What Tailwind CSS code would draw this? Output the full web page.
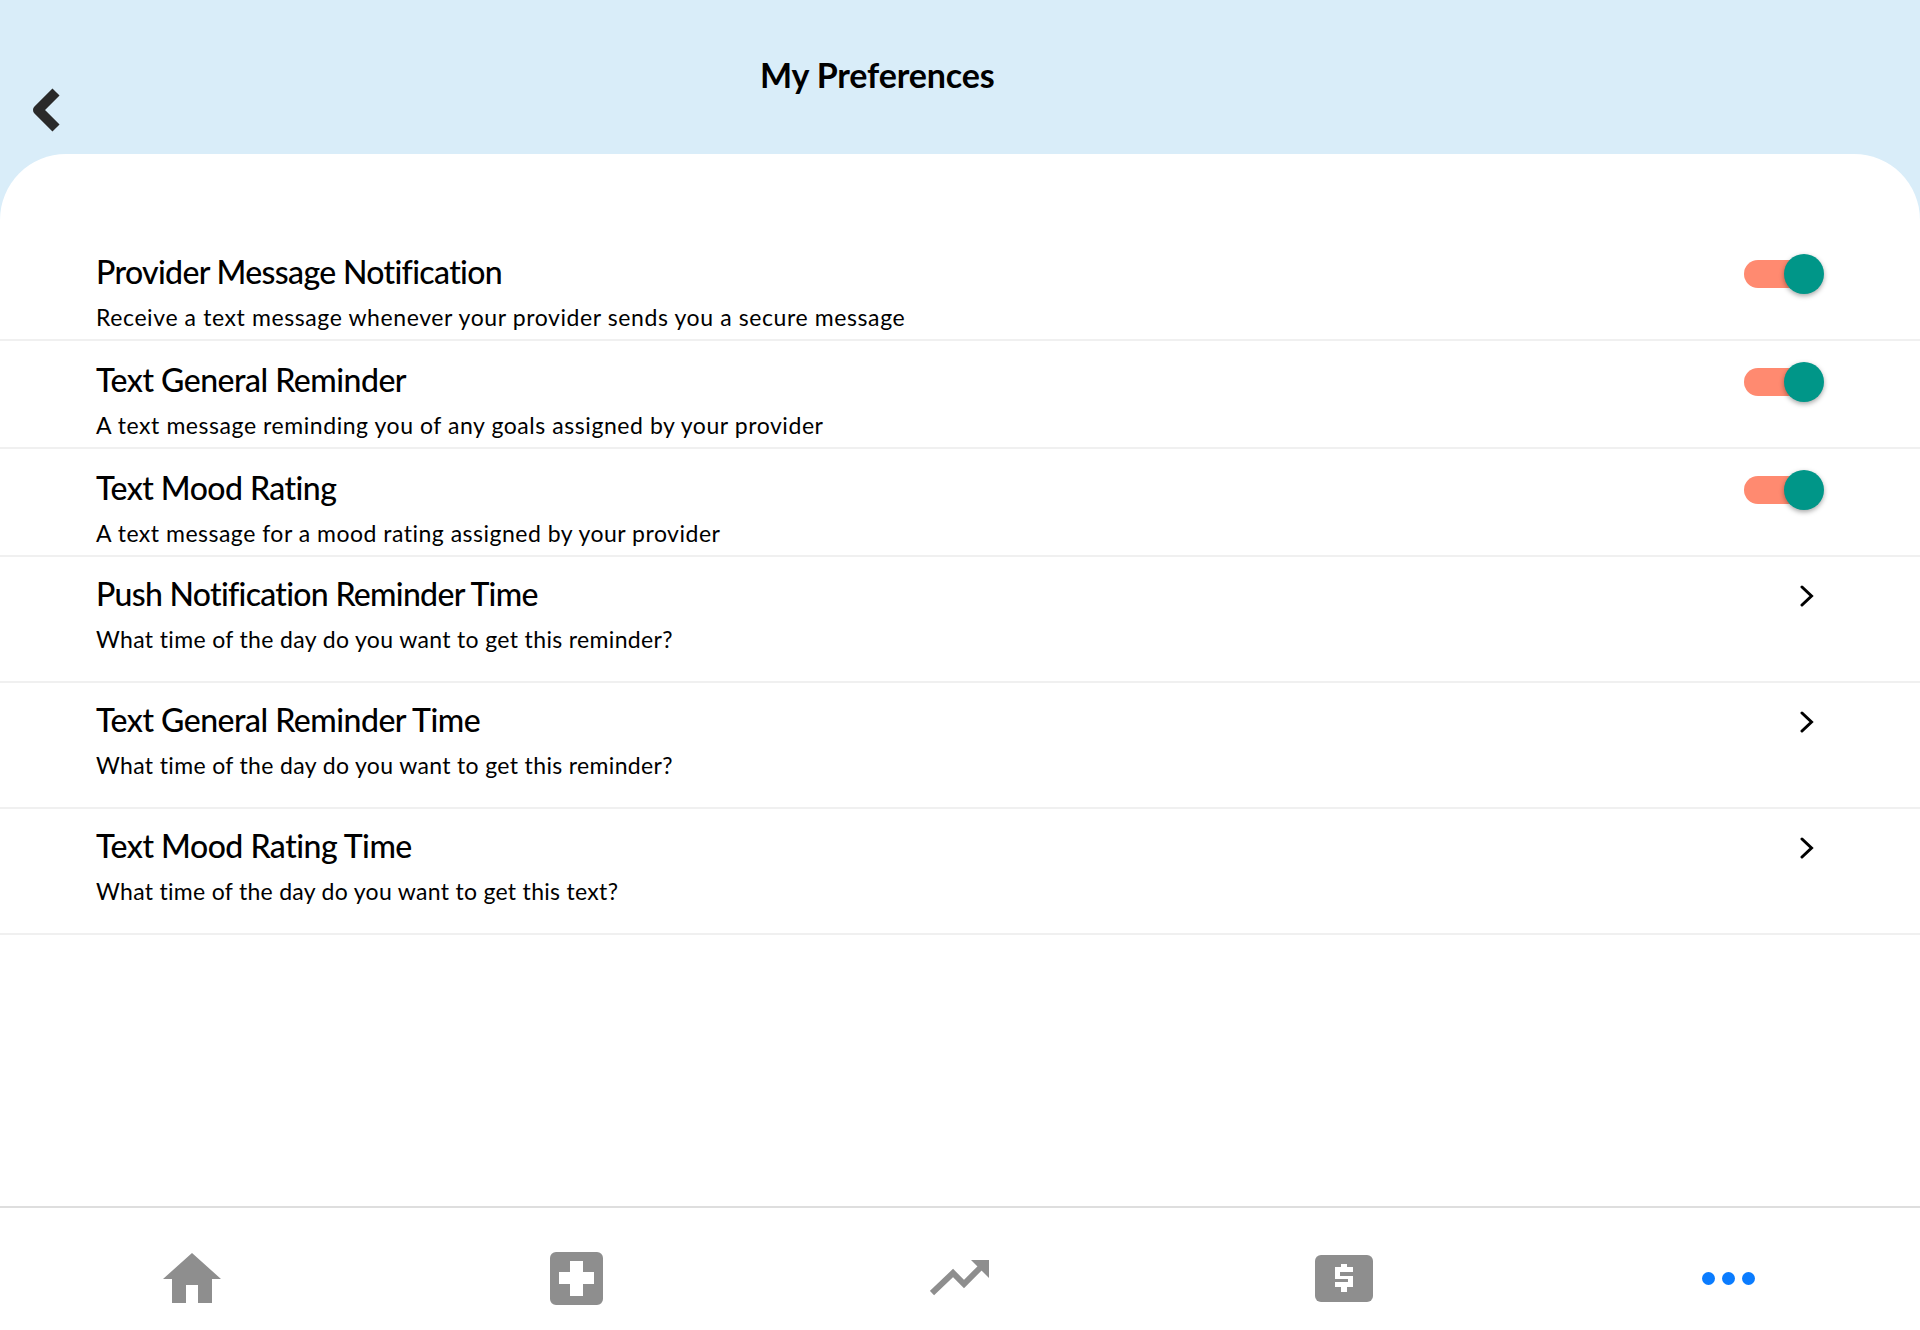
<!DOCTYPE html>
<html lang="en">
<head>
    <meta charset="UTF-8">
    <title>My Preferences</title>
    <script src="https://cdn.jsdelivr.net/npm/@tailwindcss/browser@4"></script>
</head>
<body class="bg-white font-['Lato',sans-serif] text-black">
<div class="h-[1330px] flex flex-col overflow-hidden">
    <!-- header -->
    <div class="bg-[#d9edf9] h-[220px] shrink-0 flex items-start pl-[29px] pt-[88px]">
        <svg class="w-[34px] h-[44px] shrink-0" viewBox="0 0 34 44"><path d="M27 4 L9 22 L27 40" fill="none" stroke="#2a2a2a" stroke-width="10" stroke-linejoin="round"/></svg>
        <h1 class="ml-[697px] -mt-[35px] text-[34px] leading-[44px] font-bold tracking-[-0.15px]">My Preferences</h1>
    </div>

    <!-- content -->
    <div class="-mt-[66px] bg-white rounded-t-[66px] pt-[78px] flex-1">
        <div class="h-[109px] border-b-2 border-[#f0f0f0] pl-[96px] pr-[96px] flex justify-between">
            <div class="pt-[20px]">
                <div class="text-[32px] leading-[40px] tracking-[-0.65px] font-medium">Provider Message Notification</div>
                <div class="mt-[10px] text-[23px] leading-[30px] tracking-[0.6px]">Receive a text message whenever your provider sends you a secure message</div>
            </div>
            <div class="relative w-[80px] h-[40px] mt-[22px]">
                <div class="absolute left-0 top-[6px] w-[72px] h-[28px] rounded-full bg-[#ff8a70]"></div>
                <div class="absolute left-[40px] top-0 w-[40px] h-[40px] rounded-full bg-[#009688] shadow-[0_2px_5px_rgba(0,0,0,0.35)]"></div>
            </div>
        </div>
        <div class="h-[108px] border-b-2 border-[#f0f0f0] pl-[96px] pr-[96px] flex justify-between">
            <div class="pt-[19px]">
                <div class="text-[32px] leading-[40px] tracking-[-0.5px] font-medium">Text General Reminder</div>
                <div class="mt-[10px] text-[23px] leading-[30px] tracking-[0.56px]">A text message reminding you of any goals assigned by your provider</div>
            </div>
            <div class="relative w-[80px] h-[40px] mt-[21px]">
                <div class="absolute left-0 top-[6px] w-[72px] h-[28px] rounded-full bg-[#ff8a70]"></div>
                <div class="absolute left-[40px] top-0 w-[40px] h-[40px] rounded-full bg-[#009688] shadow-[0_2px_5px_rgba(0,0,0,0.35)]"></div>
            </div>
        </div>
        <div class="h-[108px] border-b-2 border-[#f0f0f0] pl-[96px] pr-[96px] flex justify-between">
            <div class="pt-[19px]">
                <div class="text-[32px] leading-[40px] tracking-[-0.55px] font-medium">Text Mood Rating</div>
                <div class="mt-[10px] text-[23px] leading-[30px] tracking-[0.5px]">A text message for a mood rating assigned by your provider</div>
            </div>
            <div class="relative w-[80px] h-[40px] mt-[21px]">
                <div class="absolute left-0 top-[6px] w-[72px] h-[28px] rounded-full bg-[#ff8a70]"></div>
                <div class="absolute left-[40px] top-0 w-[40px] h-[40px] rounded-full bg-[#009688] shadow-[0_2px_5px_rgba(0,0,0,0.35)]"></div>
            </div>
        </div>
        <div class="h-[126px] border-b-2 border-[#f0f0f0] pl-[96px] pr-[106px] flex justify-between">
            <div class="pt-[17px]">
                <div class="text-[32px] leading-[40px] tracking-[-0.7px] font-medium">Push Notification Reminder Time</div>
                <div class="mt-[10px] text-[23px] leading-[30px] tracking-[0.35px]">What time of the day do you want to get this reminder?</div>
            </div>
            <svg class="w-[14px] h-[24px] mt-[27px]" viewBox="0 0 14 24"><path d="M2 3 L11.5 12 L2 21" fill="none" stroke="#000" stroke-width="3" stroke-linecap="round"/></svg>
        </div>
        <div class="h-[126px] border-b-2 border-[#f0f0f0] pl-[96px] pr-[106px] flex justify-between">
            <div class="pt-[17px]">
                <div class="text-[32px] leading-[40px] tracking-[-0.5px] font-medium">Text General Reminder Time</div>
                <div class="mt-[10px] text-[23px] leading-[30px] tracking-[0.35px]">What time of the day do you want to get this reminder?</div>
            </div>
            <svg class="w-[14px] h-[24px] mt-[27px]" viewBox="0 0 14 24"><path d="M2 3 L11.5 12 L2 21" fill="none" stroke="#000" stroke-width="3" stroke-linecap="round"/></svg>
        </div>
        <div class="h-[126px] border-b-2 border-[#f0f0f0] pl-[96px] pr-[106px] flex justify-between">
            <div class="pt-[17px]">
                <div class="text-[32px] leading-[40px] tracking-[-0.5px] font-medium">Text Mood Rating Time</div>
                <div class="mt-[10px] text-[23px] leading-[30px] tracking-[0.3px]">What time of the day do you want to get this text?</div>
            </div>
            <svg class="w-[14px] h-[24px] mt-[27px]" viewBox="0 0 14 24"><path d="M2 3 L11.5 12 L2 21" fill="none" stroke="#000" stroke-width="3" stroke-linecap="round"/></svg>
        </div>
    </div>

    <!-- bottom nav -->
    <div class="h-[124px] shrink-0 border-t-2 border-[#dedede] grid grid-cols-5 items-center pt-[18px]">
        <div class="flex justify-center">
            <svg class="w-[58px] h-[50px]" viewBox="0 0 58 50"><path d="M29 0 L58 26 L49 26 L49 50 L35 50 L35 32 L23 32 L23 50 L9 50 L9 26 L0 26 Z" fill="#8e8e8e"/></svg>
        </div>
        <div class="flex justify-center">
            <svg class="w-[53px] h-[53px]" viewBox="0 0 53 53"><path fill-rule="evenodd" d="M6 0 H47 A6 6 0 0 1 53 6 V47 A6 6 0 0 1 47 53 H6 A6 6 0 0 1 0 47 V6 A6 6 0 0 1 6 0 Z M20 9 V20 H9 V32 H20 V44 H33 V32 H44 V20 H33 V9 Z" fill="#8e8e8e"/></svg>
        </div>
        <div class="flex justify-center">
            <svg class="w-[60px] h-[36px]" viewBox="0 0 60 36"><path d="M2 33 L23 13 L34 24 L50 8" fill="none" stroke="#8e8e8e" stroke-width="6"/><path d="M41 0 H59 V18 Z" fill="#8e8e8e"/></svg>
        </div>
        <div class="flex justify-center">
            <div class="w-[58px] h-[47px] rounded-[6px] bg-[#8e8e8e] flex items-center justify-center">
                <svg class="w-[18px] h-[28px]" viewBox="0 0 18 28"><path d="M6 0 H12 V3 H18 V8 H5 V12 H18 V23 H12 V28 H6 V23 H0 V18 H13 V15 H0 V3 H6 Z" fill="#fff"/></svg>
            </div>
        </div>
        <div class="flex justify-center gap-[7px]">
            <div class="w-[13px] h-[13px] rounded-full bg-[#0a7cff]"></div>
            <div class="w-[13px] h-[13px] rounded-full bg-[#0a7cff]"></div>
            <div class="w-[13px] h-[13px] rounded-full bg-[#0a7cff]"></div>
        </div>
    </div>
</div>
</body>
</html>
